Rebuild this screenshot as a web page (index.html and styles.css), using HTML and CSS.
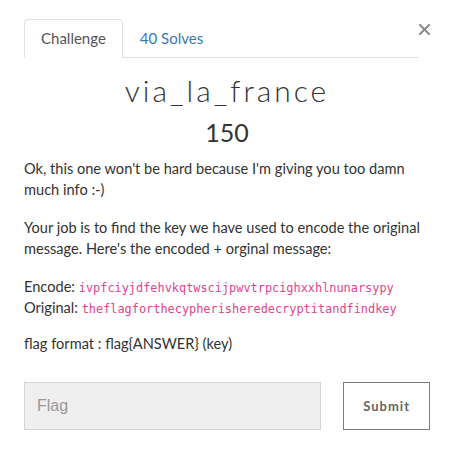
FILE: index.html
```html
<!DOCTYPE html>
<html>
<head>
<meta charset="utf-8">
<link rel="stylesheet" href="styles.css">
</head>
<body>
<div class="modal">
  <button class="close" aria-label="Close">
    <svg width="11" height="11" viewBox="0 0 11 11"><path d="M1 1L10 10M10 1L1 10" stroke="#8a8a8a" stroke-width="2" stroke-linecap="square"/></svg>
  </button>
  <ul class="tabs">
    <li class="tab active">Challenge</li>
    <li class="tab link">40 Solves</li>
  </ul>
  <h2 class="title">via_la_france</h2>
  <h3 class="value">150</h3>
  <div class="desc">
    <p>Ok, this one won't be hard because I'm giving you too damn much info :-)</p>
    <p>Your job is to find the key we have used to encode the original message. Here's the encoded + orginal message:</p>
    <p class="codes">Encode: <code>ivpfciyjdfehvkqtwscijpwvtrpcighxxhlnunarsypy</code><br>Original: <code>theflagforthecypherisheredecryptitandfindkey</code></p>
    <p>flag format : flag{ANSWER} (key)</p>
  </div>
  <form class="submit-row">
    <input class="flag-input" type="text" placeholder="Flag">
    <button class="submit-btn" type="button">Submit</button>
  </form>
</div>
</body>
</html>
```
FILE: styles.css
```css
html, body {
  margin: 0;
  padding: 0;
  background: #fff;
}
body {
  font-family: Lato, "Noto Sans", sans-serif;
  color: #333;
}
.modal {
  position: relative;
  padding: 19px 23px 0 24px;
}
.close {
  position: absolute;
  top: 24px;
  left: 419px;
  border: 0;
  background: transparent;
  padding: 0;
  width: 11px;
  height: 11px;
  display: block;
}
.close svg { display: block; }
.tabs {
  list-style: none;
  margin: 0 12px 0 0;
  padding: 0;
  display: flex;
  border-bottom: 1px solid #dedede;
}
.tab {
  font-size: 15px;
  line-height: 21px;
  padding: 8px 16px;
  border: 1px solid transparent;
  border-bottom: 0;
  margin-bottom: -1px;
}
.tab.active {
  color: #555;
  border-color: #e2e2e2;
  border-radius: 4px 4px 0 0;
  background: #fff;
  padding-bottom: 9px;
}
.tab.link {
  color: #3b78b2;
}
.title {
  margin: 15px 0 0;
  text-align: center;
  font-family: Lato, sans-serif;
  font-weight: 300;
  font-size: 30px;
  line-height: 34px;
  letter-spacing: 3px;
  color: #333;
}
.value {
  margin: 10px 0 0;
  text-align: center;
  font-weight: 400;
  font-size: 25px;
  line-height: 30px;
  color: #333;
}
.desc {
  margin-top: 11px;
  font-size: 14.6px;
  line-height: 21px;
}
.desc p {
  margin: 0 0 17px;
}
.desc p.codes {
  margin-bottom: 15px;
}
code {
  font-family: "DejaVu Sans Mono", "Liberation Mono", monospace;
  font-size: 11.9px;
  line-height: 1;
  color: #e0448f;
}
.submit-row {
  display: flex;
  gap: 22px;
  margin: 28px 0 0;
}
.flag-input {
  box-sizing: border-box;
  width: 298px;
  height: 48px;
  margin: 0;
  border: 1px solid #d4d4d4;
  background: #efefef;
  padding: 0 12px;
  font-family: "Liberation Sans", Arial, sans-serif;
  font-size: 16px;
  color: #555;
  outline: none;
}
.flag-input::placeholder {
  color: #999;
}
.submit-btn {
  box-sizing: border-box;
  width: 87px;
  height: 48px;
  margin: 0;
  border: 1px solid #7c7c7c;
  background: #fff;
  font-family: Lato, sans-serif;
  font-weight: 700;
  font-size: 13px;
  letter-spacing: 1px;
  color: #666;
  padding: 0;
}
```
